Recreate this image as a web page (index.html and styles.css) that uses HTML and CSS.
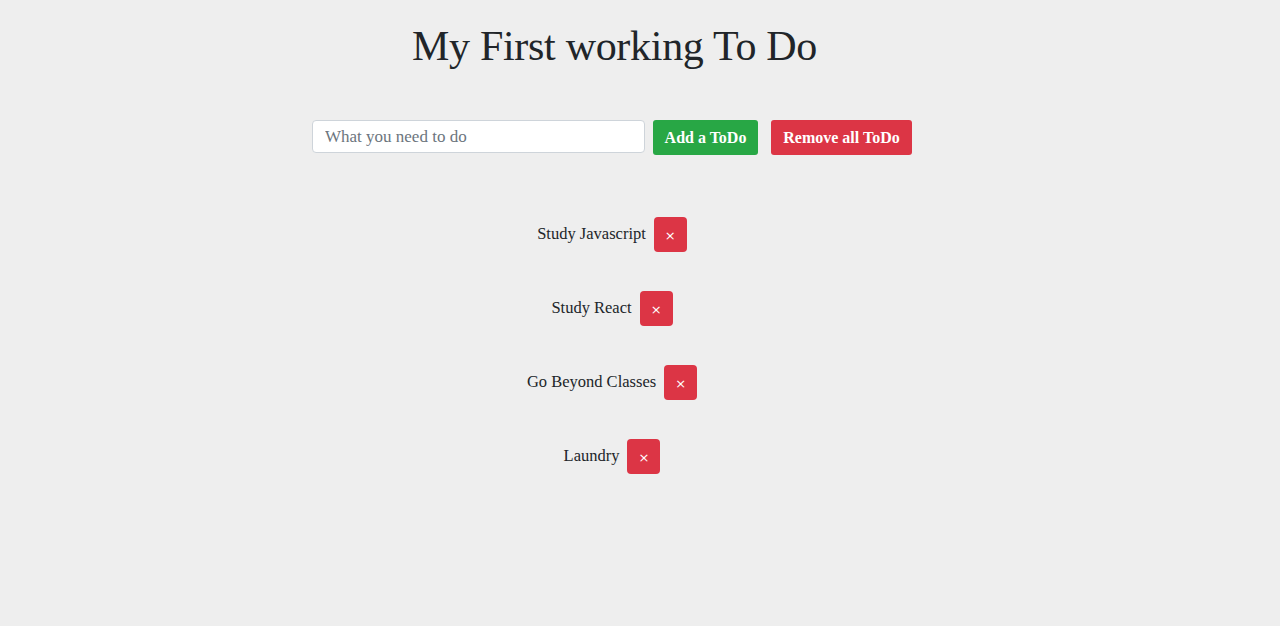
FILE: index.html
```html
<!DOCTYPE html>
<html>
<head>
<meta charset="utf-8">
<link rel="stylesheet" href="styles.css">
</head>
<body>
<div class="app">
  <h1 class="title">My First working To Do</h1>
  <form class="form">
    <input class="input" type="text" placeholder="What you need to do">
    <button type="button" class="btn btn-add">Add a ToDo</button>
    <button type="button" class="btn btn-remove-all">Remove all ToDo</button>
  </form>
  <ul class="list">
    <li class="item"><span class="item-text">Study Javascript</span><button class="btn-x">×</button></li>
    <li class="item"><span class="item-text">Study React</span><button class="btn-x">×</button></li>
    <li class="item"><span class="item-text">Go Beyond Classes</span><button class="btn-x">×</button></li>
    <li class="item"><span class="item-text">Laundry</span><button class="btn-x">×</button></li>
  </ul>
</div>
</body>
</html>
```

FILE: styles.css
```css
html, body {
  margin: 0;
  padding: 0;
  background: #eeeeee;
  color: #212529;
  font-family: "Liberation Serif", "DejaVu Serif", serif;
}
.app {
  width: 1224px;
  display: flex;
  flex-direction: column;
  align-items: center;
}
.title {
  margin: 20px 0 0 0;
  padding-left: 5px;
  font-size: 42px;
  font-weight: 400;
  line-height: 52px;
  letter-spacing: -0.3px;
}
.form {
  margin-top: 48px;
  display: flex;
  align-items: flex-start;
}
.input {
  width: 333px;
  height: 33px;
  box-sizing: border-box;
  border: 1px solid #ced4da;
  border-radius: 4px;
  background: #fff;
  padding: 0 12px;
  font-family: inherit;
  font-size: 17px;
  color: #495057;
  margin-right: 8px;
}
.input::placeholder {
  color: #6c757d;
}
.btn {
  height: 35px;
  border: none;
  border-radius: 3px;
  color: #fff;
  font-family: inherit;
  font-weight: 700;
  font-size: 16px;
  padding: 0;
  cursor: pointer;
}
.btn-add {
  width: 105px;
  background: #28a745;
  margin-right: 13px;
}
.btn-remove-all {
  width: 141px;
  background: #dc3545;
}
.list {
  list-style: none;
  margin: 62px 0 0 0;
  padding: 0;
  display: flex;
  flex-direction: column;
  align-items: center;
  gap: 39px;
}
.item {
  display: flex;
  align-items: center;
  gap: 8px;
}
.item-text {
  font-size: 16.5px;
  line-height: 35px;
  margin-top: -2px;
}
.btn-x {
  width: 33px;
  height: 35px;
  border: none;
  border-radius: 4px;
  background: #dc3545;
  color: #fff;
  font-family: "DejaVu Sans", sans-serif;
  font-size: 13px;
  padding: 0;
  padding-top: 2px;
}
```
